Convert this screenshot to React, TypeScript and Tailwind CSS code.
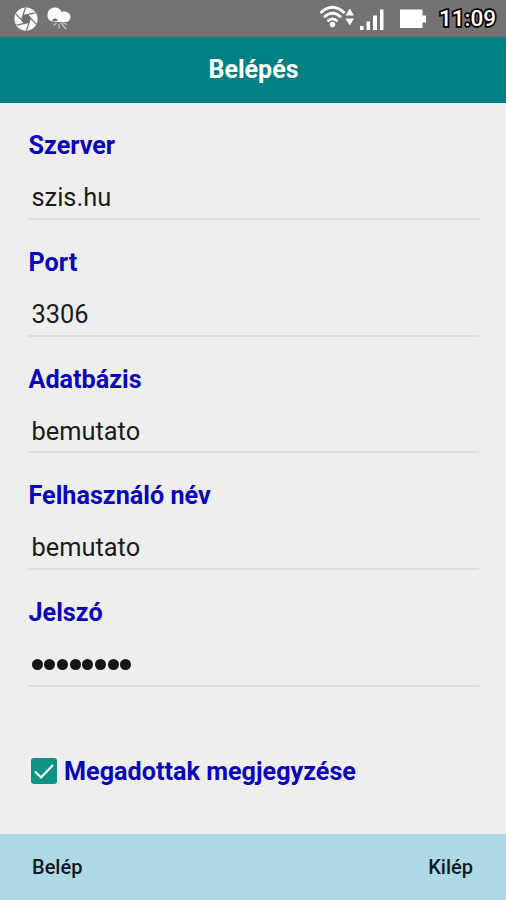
type FieldProps = { label: string; value: string; secret?: boolean };

function Field({ label, value, secret }: FieldProps) {
  return (
    <div className="flex h-[116.75px] flex-col border-b-2 border-[#dedede] pt-[28px]">
      <div className="h-[30px] pl-[0.5px] text-[25.2px] leading-[30px] font-bold text-[#0b05b9] whitespace-nowrap">{label}</div>
      <div className="mt-[21px] flex h-[30px] items-center pl-[3.5px] text-[25.4px] leading-[30px] text-[#1c1c1c]">
        {secret ? (
          <span className="flex gap-[1.7px]" aria-label="Jelszó">
            {Array.from({ length: 8 }, (_, i) => (
              <span key={i} className="size-[11px] rounded-full bg-[#151515]" />
            ))}
          </span>
        ) : (
          value
        )}
      </div>
    </div>
  );
}

function ShutterIcon() {
  return (
    <svg className="size-6" viewBox="0 0 24 24">
      <circle cx="12" cy="12" r="11.6" fill="#fafafa" />
      <g transform="rotate(-12 12 12)">
        <g stroke="#737071" strokeWidth="1.200" fill="none">
          {[0, 60, 120, 180, 240, 300].map((a) => (
            <path key={a} d="M9.700 8H22.500" transform={`rotate(${a} 12 12)`} />
          ))}
        </g>
        <path d="M9.700 8h4.600l2.300 4-2.300 4H9.700l-2.300-4z" fill="#737071" />
      </g>
    </svg>
  );
}

function WeatherIcon() {
  return (
    <svg className="h-6 w-6" viewBox="0 0 24 24">
      <path
        d="M6 14.500C2 14 0 11 .5 7.500 .8 2.500 4.500.5 8 .5c3.500 0 5.500 2 6.500 4.500C19 3.500 23.500 6 23.500 10c0 3-2.500 5-5.500 5h-6.500z"
        fill="#fafafa"
      />
      <path d="M5.500 13c1-2 4-2 5 0v1H5.500z" fill="#737071" />
      <path d="M9.500 16l-3 2.500M12 16.500v5M14 16l5 6M15.500 15.500l4.500 2" stroke="#c8c6c7" strokeWidth="1.200" />
    </svg>
  );
}

function StatusIcons() {
  return (
    <svg className="h-[37px] w-[112px]" viewBox="318 0 112 37">
      <g fill="none" stroke="#fff" strokeWidth="2.700">
        <path d="M320.500 13Q332.500 1.500 344.500 13" />
        <path d="M324 17.300Q332.500 9 341 17.300" />
        <path d="M327.500 21.300Q332.500 16.500 337.500 21.300" />
      </g>
      <circle cx="332.500" cy="24.500" r="2.700" fill="#fff" />
      <g fill="#fff">
        <path d="M345.500 15.500h8.500l-4.200-7zM345.500 18.500h8.500l-4.200 7z" />
        <path d="M360 26h3.500v4H360zM366.500 21.500h3.500v8.500h-3.500zM373 15.500h4V30h-4zM380 9.500h3.500V30H380z" />
        <path d="M400 9.500h22.500v6h3.500v7h-3.500v5.500H400z" />
      </g>
    </svg>
  );
}

export default function App() {
  return (
    <div className="flex h-[900px] w-full flex-col overflow-hidden bg-[#eeeeee] font-[Roboto,sans-serif]">
      <div className="flex h-[37px] shrink-0 items-center bg-[#757273]">
        <div className="flex items-center gap-[9px] pl-[14px]">
          <ShutterIcon />
          <WeatherIcon />
        </div>
        <div className="ml-auto flex items-center pr-[10px]">
          <StatusIcons />
          <span className="ml-[9px] w-[57px] text-[22.500px] leading-[37px] font-medium whitespace-nowrap text-white [paint-order:stroke_fill] [-webkit-text-stroke:3.500px_#000]">
            11:09
          </span>
        </div>
      </div>
      <header className="flex h-[66px] shrink-0 items-center justify-center bg-[#008080] pl-[1px] text-[25px] leading-[30px] font-bold text-white">
        <h1>Belépés</h1>
      </header>
      <main className="flex flex-1 flex-col pr-[27px] pl-[28px]">
        <Field label="Szerver" value="szis.hu" />
        <Field label="Port" value="3306" />
        <Field label="Adatbázis" value="bemutato" />
        <Field label="Felhasználó név" value="bemutato" />
        <Field label="Jelszó" value="" secret />
        <div className="mt-[69px] flex h-[30px] items-center gap-[7px] pl-[3px]">
          <span className="flex size-[26px] items-center justify-center rounded-[3px] bg-[#0c9383]">
            <svg className="size-[26px]" viewBox="0 0 26 26" fill="none" stroke="#fff" strokeWidth="2.200">
              <path d="M4 13.500l6 6L22 7" />
            </svg>
          </span>
          <span className="pt-[2px] text-[25.2px] leading-[30px] font-bold whitespace-nowrap text-[#0b05b9]">Megadottak megjegyzése</span>
        </div>
      </main>
      <footer className="flex h-[66px] shrink-0 items-center justify-between bg-[#add8e6] pr-[33px] pl-[32px] text-[20px] leading-[24px] font-medium text-[#101820]">
        <span>Belép</span>
        <span>Kilép</span>
      </footer>
    </div>
  );
}
